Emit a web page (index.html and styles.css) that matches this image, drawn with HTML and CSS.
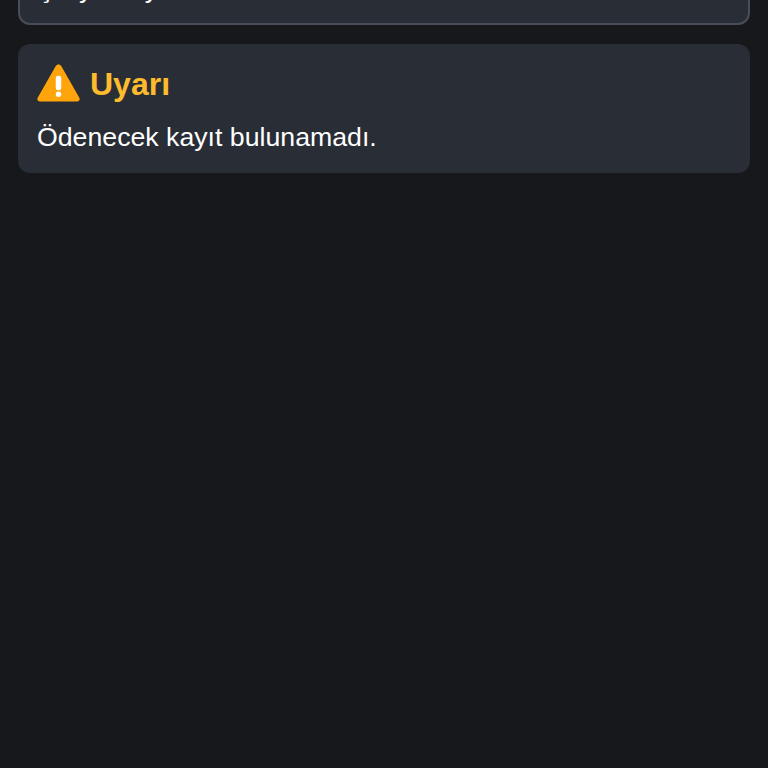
FILE: index.html
```html
<!DOCTYPE html>
<html lang="tr">
<head>
<meta charset="utf-8">
<title>Uyarı</title>
<link rel="stylesheet" href="styles.css">
</head>
<body>
<main class="page">
  <section class="card card-top">
    <p class="top-text">Şu yılda yok</p>
  </section>
  <section class="card card-alert">
    <h2 class="alert-title">
      <svg class="alert-icon" viewBox="0 0 44 38" aria-hidden="true">
        <path class="tri" d="M22 0c1.200 0 2.200.6 2.800 1.600l18.500 32.400c1.100 1.900-.2 4-2.400 4H3.100C.9 38-.4 35.900.7 34L19.200 1.600C19.800.6 20.800 0 22 0z"/>
        <rect class="mark" x="19.200" y="11.500" width="5.600" height="15" rx="2.400"/>
        <circle class="mark" cx="22" cy="30.500" r="2.800"/>
      </svg>
      <span>Uyarı</span>
    </h2>
    <p class="alert-text">Ödenecek kayıt bulunamadı.</p>
  </section>
</main>
</body>
</html>
```

FILE: styles.css
```css
html, body {
  margin: 0;
  height: 100%;
  background: #16181c;
  overflow: hidden;
}
body {
  font-family: "Liberation Sans", Arial, sans-serif;
  color: #ffffff;
}
.page {
  display: flex;
  flex-direction: column;
  gap: 19px;
  padding: 0 18px;
}
.card {
  background: #292d36;
  border-radius: 12px;
}
.card-top {
  height: 60px;
  margin-top: -35px;
  box-sizing: border-box;
  border: 2px solid #474d59;
  overflow: hidden;
}
.top-text {
  margin: 7px 0 0 17px;
  font-size: 26.700px;
  line-height: 30px;
  word-spacing: 2px;
}
.card-alert {
  height: 129px;
  box-sizing: border-box;
  padding: 19px 19px 0;
}
.alert-title {
  display: flex;
  align-items: center;
  gap: 10px;
  margin: 0;
  height: 42px;
  font-size: 32px;
  font-weight: 700;
  color: #fdbb2d;
}
.alert-icon {
  width: 43px;
  height: 38px;
  margin-bottom: 2px;
}
.tri { fill: #ffa40a; }
.mark { fill: #ffffff; }
.alert-text {
  margin: 17px 0 0;
  font-size: 26.700px;
  line-height: 30px;
}
```
